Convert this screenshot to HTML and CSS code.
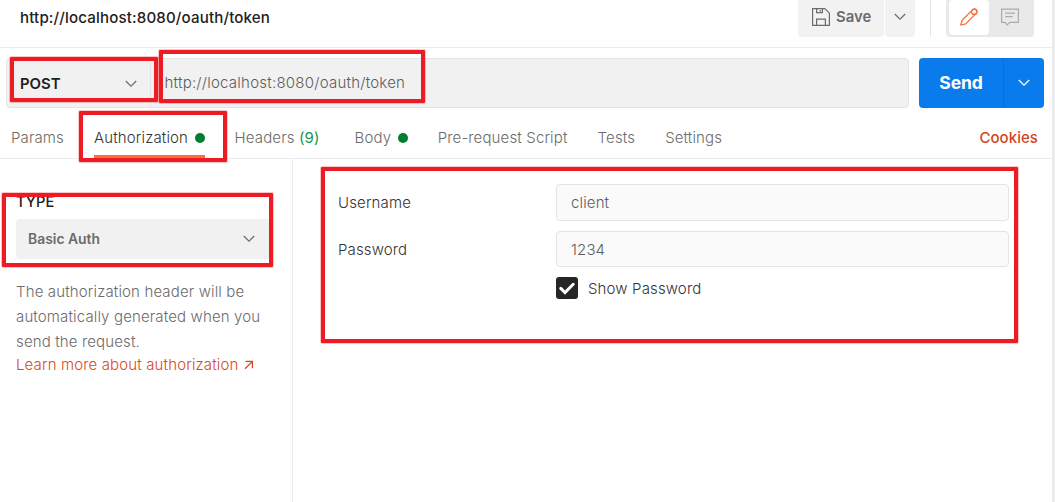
FILE: index.html
```html
<!DOCTYPE html>
<html lang="en">
<head>
<meta charset="utf-8">
<title>http://localhost:8080/oauth/token</title>
<link rel="stylesheet" href="styles.css">
</head>
<body>
<div class="app">
  <header class="header">
    <h1 class="title">http://localhost:8080/oauth/token</h1>
    <div class="actions">
      <button class="save">
        <svg width="18" height="18" viewBox="0 0 18 18" fill="none" stroke="#6b6b6b" stroke-width="1.2"><path d="M.6.6h12.2l4.6 4.6v12.2H.6zM4.6.6v4h5.8v-4M8.2 2v1.4M4.6 17.4v-6.2h8.8v6.2"/></svg>
        <span>Save</span>
      </button>
      <button class="save-more"><svg width="12" height="8" viewBox="0 0 12 8"><path class="chevron" d="M.8 1l5.2 5.2L11.2 1"/></svg></button>
      <span class="divider"></span>
      <div class="toggle">
        <span class="mode active"><svg width="18" height="18" viewBox="0 0 18 18" fill="none" stroke="#ff6c37" stroke-width="1.3" stroke-linejoin="round"><path d="M.8 17.2l1.3-4.9L12.7 1.6q1.8-1.6 3.5.1t.1 3.5L5.7 15.9z"/><circle cx="14.2" cy="3.8" r="2.7"/></svg></span>
        <span class="mode"><svg width="18" height="18" viewBox="0 0 18 18" fill="none" stroke="#ababab" stroke-width="1.2"><path d="M.6 1.1h16.8v13.3H8.8L6.2 17l-2.4-2.6H.6zM4 5.2h10M4 8.7h7.6"/></svg></span>
      </div>
    </div>
  </header>

  <section class="request">
    <div class="request-bar">
      <div class="method"><span>POST</span><svg width="12" height="8" viewBox="0 0 12 8"><path class="chevron" d="M.8 1l5.2 5.2L11.2 1"/></svg></div>
      <div class="url">http://localhost:8080/oauth/token</div>
    </div>
    <div class="send-group">
      <button class="send">Send</button>
      <button class="send-more"><svg width="12" height="8" viewBox="0 0 12 8"><path class="chevron light" d="M.8 1l5.2 5.2L11.2 1"/></svg></button>
    </div>
  </section>

  <nav class="tabs">
    <span class="tab params">Params</span>
    <span class="tab auth selected">Authorization<i class="dot"></i></span>
    <span class="tab headers">Headers <b class="count">(9)</b></span>
    <span class="tab body-tab">Body<i class="dot"></i></span>
    <span class="tab script">Pre-request Script</span>
    <span class="tab tests">Tests</span>
    <span class="tab">Settings</span>
    <a class="cookies">Cookies</a>
  </nav>

  <main class="content">
    <aside class="sidebar">
      <h2 class="type">TYPE</h2>
      <div class="select"><span>Basic Auth</span><svg width="12" height="8" viewBox="0 0 12 8"><path class="chevron" d="M.8 1l5.2 5.2L11.2 1"/></svg></div>
      <p class="hint">The authorization header will be<br>automatically generated when you<br>send the request.</p>
      <a class="learn">Learn more about authorization<svg width="10" height="10" viewBox="0 0 10 10" fill="none" stroke="#d9481c" stroke-width="1.3"><path d="M1.6 1.4h6.8v6.8M8.2 1.6L1 8.8"/></svg></a>
    </aside>
    <form class="form">
      <label class="label">Username</label><div class="input">client</div>
      <label class="label lower">Password</label><div class="input lower">1234</div>
      <div class="show"><span class="check"><svg width="16" height="13" viewBox="0 0 16 13"><path d="M1.8 6.4l4.2 4.2 8.2-8.4" fill="none" stroke="#fff" stroke-width="2.9" stroke-linecap="round"/></svg></span><span class="show-text">Show Password</span></div>
    </form>
  </main>

  <div class="mark mark-method"></div>
  <div class="mark mark-url"></div>
  <div class="mark mark-auth"></div>
  <div class="mark mark-type"></div>
  <div class="mark mark-form"></div>
</div>
</body>
</html>
```
FILE: styles.css
```css
* { box-sizing: border-box; }
body { margin: 0; background: #fff; }
button { border: 0; padding: 0; font: inherit; color: inherit; letter-spacing: inherit; }
svg { display: block; flex: none; }

.app {
  position: relative;
  width: 1055px;
  height: 502px;
  overflow: hidden;
  display: flex;
  flex-direction: column;
  border-right: 3px solid #ebebeb;
  font: 350 15px/20px Inter, sans-serif;
  letter-spacing: .14px;
  color: #6b6b6b;
}

.chevron { fill: none; stroke: #6b6b6b; stroke-width: 1.2; }
.chevron.light { stroke: #fff; }

.header { height: 48px; flex: none; display: flex; justify-content: space-between; border-bottom: 1px solid #ebebeb; }
.title { margin: 8px 0 0 20px; font-size: 15.1px; line-height: 20px; font-weight: 550; letter-spacing: .15px; color: #212121; }
.actions { display: flex; height: 37px; padding-right: 18px; }
.save { width: 86px; display: flex; align-items: center; gap: 6px; padding: 0 0 3px 14px; background: #f2f2f2; border-radius: 0 0 4px 4px; font-size: 14.9px; font-weight: 600; letter-spacing: 0; }
.save-more { width: 30px; margin-left: 1px; display: flex; align-items: center; justify-content: center; padding-bottom: 3px; background: #f2f2f2; border-radius: 0 0 4px 4px; }
.divider { width: 1px; margin: 0 15px; background: #e6e6e6; }
.toggle { width: 88px; display: flex; padding: 0 4px 2px 3px; background: #e9e9e9; border-radius: 0 0 4px 4px; }
.mode { width: 41px; display: flex; align-items: center; justify-content: center; padding-bottom: 1px; }
.mode.active { width: 40px; background: #fff; border-radius: 4px; }

.request { height: 60px; flex: none; display: flex; gap: 10px; padding: 10px 8px 0 6px; }
.request-bar { width: 903px; height: 50px; display: flex; background: #f1f1f1; border: 1px solid #e4e4e4; border-radius: 4px; }
.method { width: 144px; display: flex; align-items: center; justify-content: space-between; padding: 2px 13px 0 13px; border-right: 1px solid #e4e4e4; color: #212121; font-size: 14.9px; font-weight: 600; letter-spacing: 0; }
.url { padding: 14px 0 0 13.5px; letter-spacing: .23px; color: #5c5c5c; }
.send-group { width: 125px; height: 50px; display: flex; background: #097bed; border-radius: 4px; overflow: hidden; color: #fff; }
.send { width: 84px; background: none; font-size: 17.5px; font-weight: 700; letter-spacing: -.1px; }
.send-more { flex: 1; display: flex; align-items: center; justify-content: center; background: none; border-left: 1px solid #076fd6; }

.tabs { height: 51px; flex: none; display: flex; align-items: stretch; padding: 0 14px 0 11px; border-bottom: 1px solid #ebebeb; }
.tab { display: flex; align-items: center; margin-right: 30px; white-space: pre; height: 50px; padding-top: 10px; border-bottom: 0 solid #ff6c37; }
.tab.selected { height: 50px; padding-top: 13px; border-bottom: 3px solid #ff6c37; color: #333; }
.dot { width: 10px; height: 10px; border-radius: 50%; background: #007f31; margin-left: 6.5px; }
.count { font-weight: 400; color: #1a9447; }
.body-tab { margin-left: 5px; }
.cookies { margin-left: auto; padding-top: 20px; font-weight: 550; letter-spacing: .06px; color: #d2451e; }

.content { flex: 1; display: flex; }
.sidebar { width: 293px; padding: 33px 0 0 16px; border-right: 1px solid #ebebeb; }
.type { margin: 0; font-size: 14.6px; line-height: 20px; font-weight: 500; letter-spacing: .06px; color: #212121; }
.select { width: 256px; height: 40px; margin-top: 7px; display: flex; align-items: center; justify-content: space-between; padding: 0 17px 0 12px; background: #f1f1f1; border-radius: 4px; font-size: 13.9px; font-weight: 600; letter-spacing: 0; }
.hint { margin: 20px 0 0; line-height: 25px; }
.learn { display: flex; align-items: center; gap: 6px; margin-top: 1px; color: #d9481c; white-space: nowrap; }

.form { width: 716px; padding: 25px 0 0 45px; display: grid; grid-template-columns: 218px 453px; grid-template-rows: 37px 36px 22px; row-gap: 10px; align-items: center; color: #333; }
.input { height: 100%; display: flex; align-items: center; padding-left: 14px; background: #fafafa; border: 1px solid #e4e4e4; border-radius: 4px; color: #5c5c5c; }
.label.lower, .input.lower { padding-top: 2px; }
.show { grid-column: 2; display: flex; align-items: center; gap: 10px; }
.show-text { padding-top: 2px; }
.check { width: 22px; height: 22px; display: flex; align-items: center; justify-content: center; background: #262626; border-radius: 3px; }

.mark { position: absolute; border: 4px solid #ed1c24; border-radius: 1px; box-shadow: 0 0 0 1px rgba(237, 28, 36, .25); }
.mark-method { left: 10px; top: 57px; width: 148px; height: 45px; }
.mark-url { left: 159px; top: 50px; width: 266px; height: 53px; }
.mark-auth { left: 79px; top: 111px; width: 148px; height: 51px; }
.mark-type { left: 2px; top: 193px; width: 271px; height: 74px; }
.mark-form { left: 321px; top: 167px; width: 697px; height: 176px; }
```
